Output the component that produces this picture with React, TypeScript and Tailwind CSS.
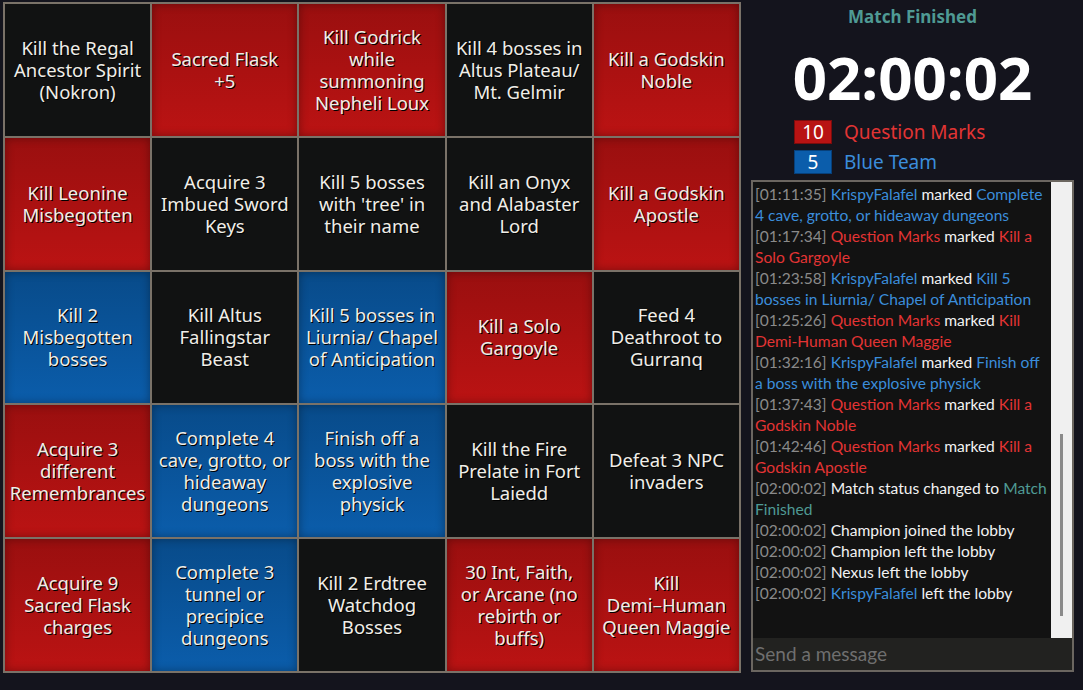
import React from "react";

type C = "r" | "b" | "k";
const cells: [string[], C][] = [
  [["Kill the Regal", "Ancestor Spirit", "(Nokron)"], "k"],
  [["Sacred Flask", "+5"], "r"],
  [["Kill Godrick", "while", "summoning", "Nepheli Loux"], "r"],
  [["Kill 4 bosses in", "Altus Plateau/", "Mt. Gelmir"], "k"],
  [["Kill a Godskin", "Noble"], "r"],
  [["Kill Leonine", "Misbegotten"], "r"],
  [["Acquire 3", "Imbued Sword", "Keys"], "k"],
  [["Kill 5 bosses", "with 'tree' in", "their name"], "k"],
  [["Kill an Onyx", "and Alabaster", "Lord"], "k"],
  [["Kill a Godskin", "Apostle"], "r"],
  [["Kill 2", "Misbegotten", "bosses"], "b"],
  [["Kill Altus", "Fallingstar", "Beast"], "k"],
  [["Kill 5 bosses in", "Liurnia/ Chapel", "of Anticipation"], "b"],
  [["Kill a Solo", "Gargoyle"], "r"],
  [["Feed 4", "Deathroot to", "Gurranq"], "k"],
  [["Acquire 3", "different", "Remembrances"], "r"],
  [["Complete 4", "cave, grotto, or", "hideaway", "dungeons"], "b"],
  [["Finish off a", "boss with the", "explosive", "physick"], "b"],
  [["Kill the Fire", "Prelate in Fort", "Laiedd"], "k"],
  [["Defeat 3 NPC", "invaders"], "k"],
  [["Acquire 9", "Sacred Flask", "charges"], "r"],
  [["Complete 3", "tunnel or", "precipice", "dungeons"], "b"],
  [["Kill 2 Erdtree", "Watchdog", "Bosses"], "k"],
  [["30 Int, Faith,", "or Arcane (no", "rebirth or", "buffs)"], "r"],
  [["Kill", "Demi\u2013Human", "Queen Maggie"], "r"],
];

const cellCls: Record<C, string> = {
  r: "bg-gradient-to-b from-[#9a0f0f] to-[#bb1313] shadow-[inset_0_0_10px_rgba(0,0,0,0.35)]",
  b: "bg-gradient-to-b from-[#084b8a] to-[#0b5dab] shadow-[inset_0_0_10px_rgba(0,0,0,0.35)]",
  k: "bg-[#111212]",
};

const T = "text-[#8a8a8a]";
const B = "text-[#3b8ddb]";
const R = "text-[#e33434]";
const W = "text-[#f2f2f2]";
const G = "text-[#4f9a94]";

function Line({ ts, children }: { ts: string; children: React.ReactNode }) {
  return (
    <div className="whitespace-nowrap">
      <span className={T}>[{ts}]</span> {children}
    </div>
  );
}

export default function App() {
  return (
    <div className="w-[1083px] h-[690px] bg-[#14141d] flex items-start pl-[3px] pt-[2px] overflow-hidden">
      <div className="w-[738px] h-[671px] border-2 border-[#7a7268] bg-[#7a7268] grid grid-cols-5 grid-rows-5 gap-[2px] shrink-0">
        {cells.map(([lines, c], i) => (
          <div
            key={i}
            className={`${cellCls[c]} flex flex-col items-center justify-center text-center text-[18.5px] leading-[22px] text-[#f0eee8] [text-shadow:1px_1px_0_#000] font-['Noto_Sans',sans-serif] overflow-hidden`}
          >
            {lines.map((l, j) => (
              <div key={j} className="whitespace-nowrap">{l}</div>
            ))}
          </div>
        ))}
      </div>
      <div className="ml-[10px] w-[323px] flex flex-col items-center font-['Noto_Sans',sans-serif]">
        <div className="mt-[3px] text-[17px] leading-[24px] font-bold text-[#4f9a94]">Match Finished</div>
        <div className="mt-[16px] text-[60px] leading-[64px] font-bold text-white">02:00:02</div>
        <div className="mt-[11px] w-[323px] pl-[43px] flex flex-col gap-[6px]">
          <div className="flex items-center gap-[12px]">
            <div className="w-[38px] h-[24px] bg-[#b81313] border border-[#7a0c0c] text-white text-[19px] leading-[22px] flex items-center justify-center">10</div>
            <div className="text-[19px] leading-[24px] text-[#e33434]">Question Marks</div>
          </div>
          <div className="flex items-center gap-[12px]">
            <div className="w-[38px] h-[24px] bg-[#0b5dab] border border-[#07407a] text-white text-[19px] leading-[22px] flex items-center justify-center">5</div>
            <div className="text-[19px] leading-[24px] text-[#3b8ddb]">Blue Team</div>
          </div>
        </div>
        <div className="mt-[6px] w-[323px] h-[492px] border-2 border-[#6b6660] flex flex-col bg-[#121212]">
          <div className="flex-1 flex min-h-0">
            <div className="flex-1 pl-[2px] pr-[2px] pt-[2px] text-[15.6px] leading-[21px] font-['Lato','Noto_Sans',sans-serif] overflow-hidden">
              <Line ts="01:11:35"><span className={B}>KrispyFalafel</span> <span className={W}>marked</span> <span className={B}>Complete<br />4 cave, grotto, or hideaway dungeons</span></Line>
              <Line ts="01:17:34"><span className={R}>Question Marks</span> <span className={W}>marked</span> <span className={R}>Kill a<br />Solo Gargoyle</span></Line>
              <Line ts="01:23:58"><span className={B}>KrispyFalafel</span> <span className={W}>marked</span> <span className={B}>Kill 5<br />bosses in Liurnia/ Chapel of Anticipation</span></Line>
              <Line ts="01:25:26"><span className={R}>Question Marks</span> <span className={W}>marked</span> <span className={R}>Kill<br />Demi-Human Queen Maggie</span></Line>
              <Line ts="01:32:16"><span className={B}>KrispyFalafel</span> <span className={W}>marked</span> <span className={B}>Finish off<br />a boss with the explosive physick</span></Line>
              <Line ts="01:37:43"><span className={R}>Question Marks</span> <span className={W}>marked</span> <span className={R}>Kill a<br />Godskin Noble</span></Line>
              <Line ts="01:42:46"><span className={R}>Question Marks</span> <span className={W}>marked</span> <span className={R}>Kill a<br />Godskin Apostle</span></Line>
              <Line ts="02:00:02"><span className={W}>Match status changed to</span> <span className={G}>Match<br />Finished</span></Line>
              <Line ts="02:00:02"><span className={W}>Champion joined the lobby</span></Line>
              <Line ts="02:00:02"><span className={W}>Champion left the lobby</span></Line>
              <Line ts="02:00:02"><span className={W}>Nexus left the lobby</span></Line>
              <Line ts="02:00:02"><span className={B}>KrispyFalafel</span> <span className={W}>left the lobby</span></Line>
            </div>
            <div className="w-[21px] bg-[#f0f0f0] flex flex-col items-center pt-[252px]">
              <div className="w-[3px] h-[182px] bg-[#8a8a8a]" />
            </div>
          </div>
          <div className="h-[32px] bg-[#222220] flex items-center pl-[2px] text-[19px] leading-[24px] text-[#6f6f6f] font-['Lato','Noto_Sans',sans-serif]">
            Send a message
          </div>
        </div>
      </div>
    </div>
  );
}
